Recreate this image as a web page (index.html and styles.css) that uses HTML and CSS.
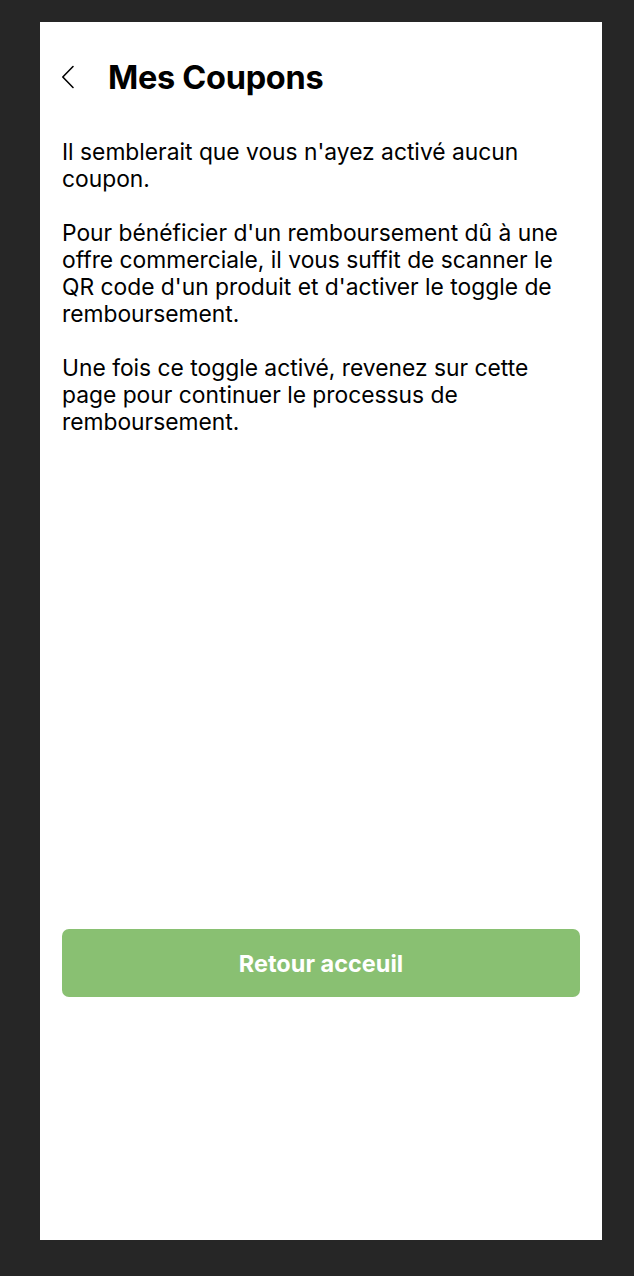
FILE: index.html
```html
<!DOCTYPE html>
<html lang="fr">
<head>
<meta charset="utf-8">
<title>Mes Coupons</title>
<link rel="stylesheet" href="styles.css">
</head>
<body>
<div class="screen">
  <header class="topbar">
    <button class="back" aria-label="Retour">
      <svg width="14" height="24" viewBox="0 0 14 24"><path d="M12 1.5 L1.8 12 L12 22.5" fill="none" stroke="#000" stroke-width="1.6" stroke-linecap="round" stroke-linejoin="round"/></svg>
    </button>
    <h1 class="title">Mes Coupons</h1>
  </header>
  <main class="content">
    <p>Il semblerait que vous n'ayez activé aucun coupon.</p>
    <p>Pour bénéficier d'un remboursement dû à une offre commerciale, il vous suffit de scanner le QR code d'un produit et d'activer le toggle de remboursement.</p>
    <p>Une fois ce toggle activé, revenez sur cette page pour continuer le processus de remboursement.</p>
  </main>
  <div class="actions">
    <button class="primary">Retour acceuil</button>
  </div>
</div>
</body>
</html>
```
FILE: styles.css
```css
html, body {
  margin: 0;
  padding: 0;
  background: #262626;
}
body {
  padding: 22px 32px 36px 40px;
  font-family: Inter, "Noto Sans", sans-serif;
}
.screen {
  width: 562px;
  height: 1218px;
  background: #fff;
  display: flex;
  flex-direction: column;
  box-sizing: border-box;
  padding: 0 22px;
}
.topbar {
  display: flex;
  align-items: center;
  height: 108px;
  padding-top: 2px;
  box-sizing: border-box;
}
.back {
  border: 0;
  background: none;
  padding: 0;
  margin: 0 32px 0 -3px;
  width: 17px;
  height: 24px;
  display: flex;
  align-items: center;
  justify-content: center;
  cursor: pointer;
}
.title {
  margin: 0;
  font-size: 32.5px;
  font-weight: 700;
  color: #000;
  letter-spacing: -0.3px;
}
.content {
  color: #000;
  font-size: 22.8px;
  line-height: 27px;
  padding-top: 8px;
}
.content p {
  margin: 0 0 27px 0;
}
.actions {
  margin-top: auto;
  padding-bottom: 243px;
}
.primary {
  width: 100%;
  height: 68px;
  border: 0;
  border-radius: 7px;
  background: #89c072;
  color: #fff;
  font-family: Inter, "Noto Sans", sans-serif;
  font-size: 23.5px;
  font-weight: 700;
  cursor: pointer;
}
```
